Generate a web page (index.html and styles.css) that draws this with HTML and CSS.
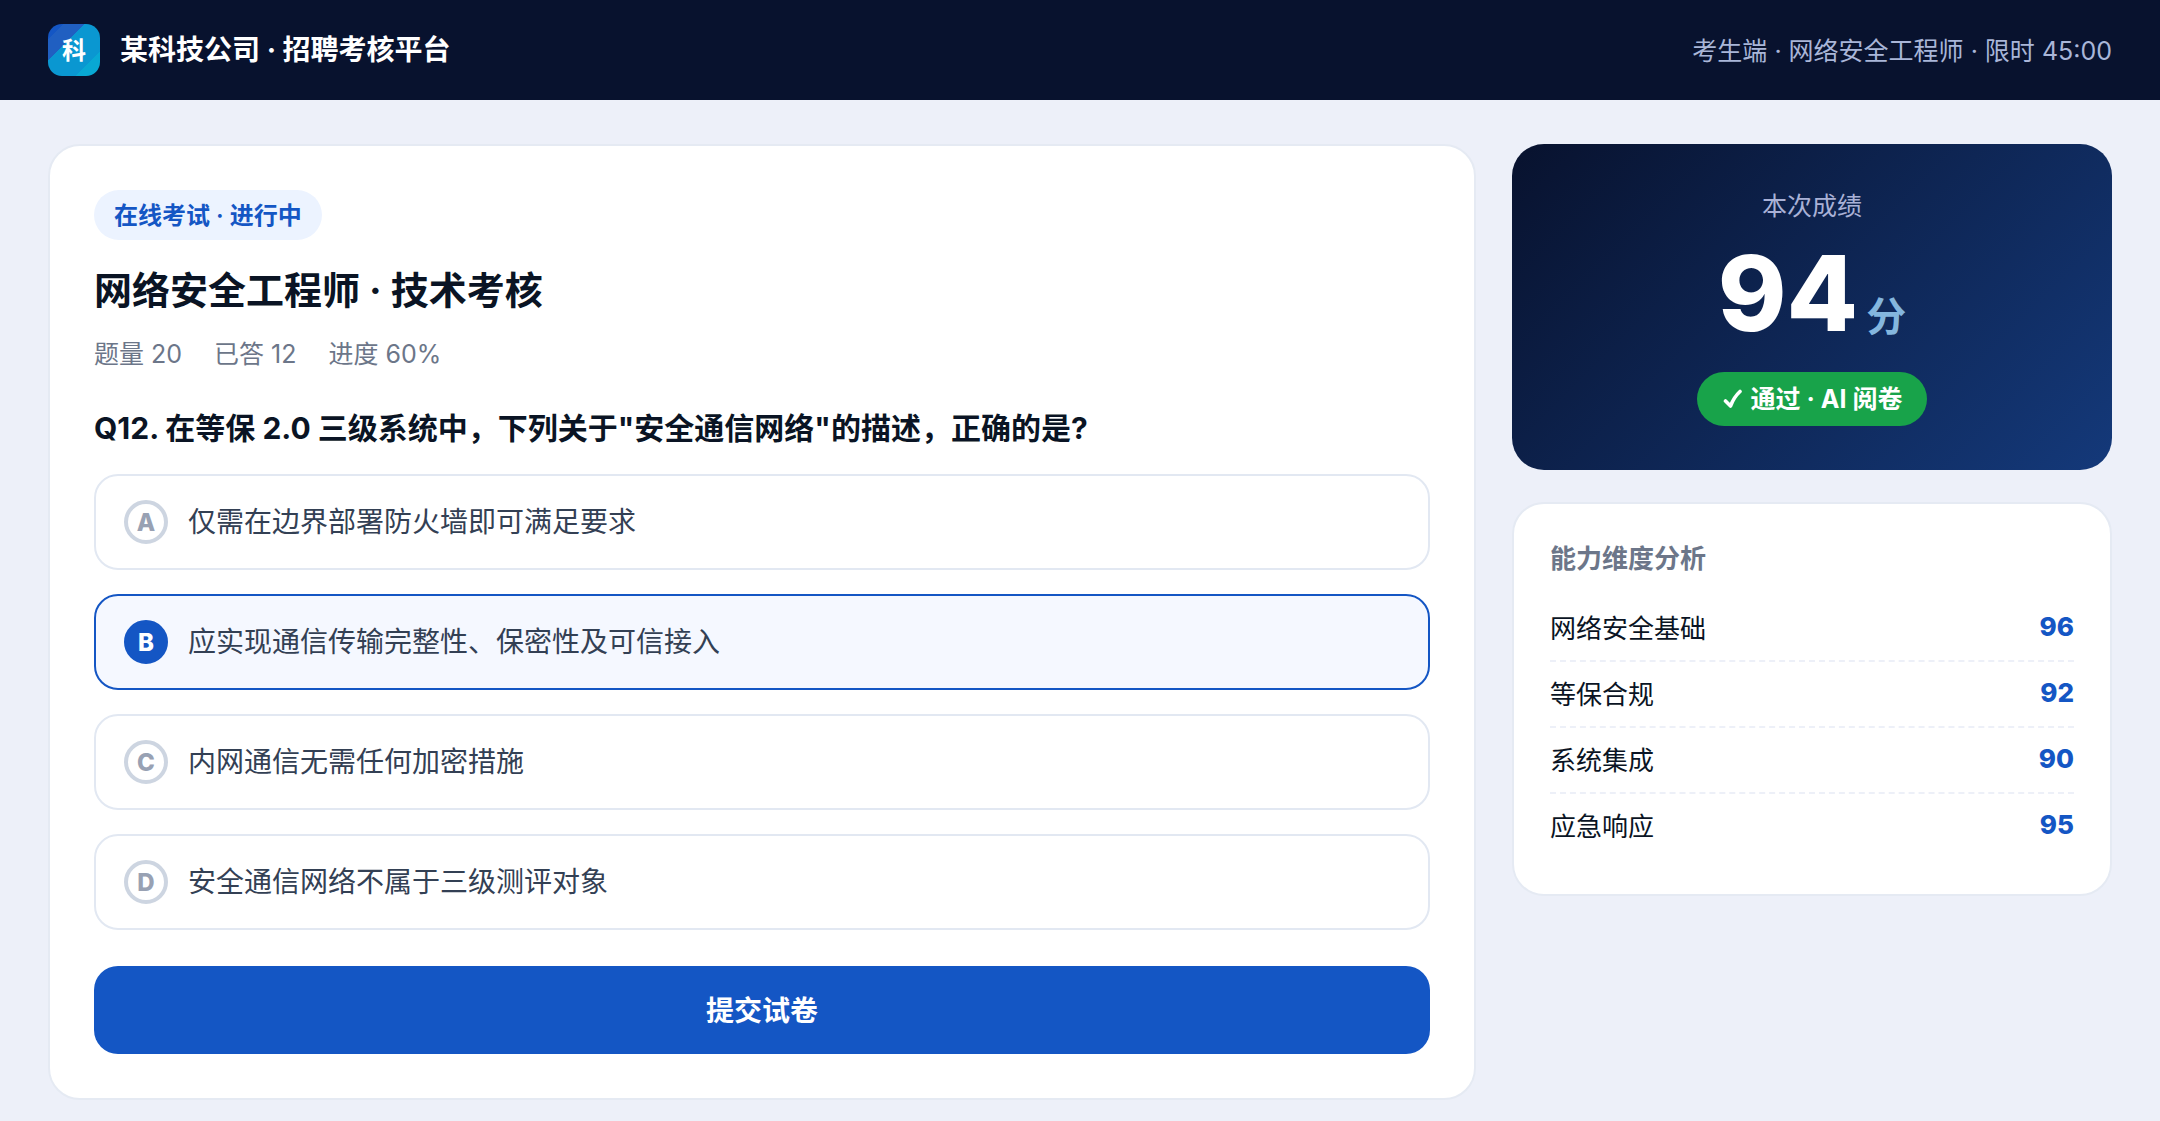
FILE: index.html
```html
<!DOCTYPE html>
<html lang="zh-CN">
<head>
  <meta charset="UTF-8">
  <meta name="viewport" content="width=device-width, initial-scale=1.0">
  <title>某科技公司 · 招聘考核平台</title>
  <link rel="stylesheet" href="styles.css">
</head>
<body>
  <header class="topbar">
    <div class="brand">
      <span class="logo">科</span>
      <span>某科技公司 · 招聘考核平台</span>
    </div>
    <div class="session">考生端 · 网络安全工程师 · 限时 45:00</div>
  </header>

  <main class="layout">
    <form class="card exam">
      <span class="tag">在线考试 · 进行中</span>
      <h1>网络安全工程师 · 技术考核</h1>
      <div class="meta">
        <span>题量 20</span>
        <span>已答 12</span>
        <span>进度 60%</span>
      </div>

      <fieldset class="question">
        <legend>Q12. 在等保 2.0 三级系统中，下列关于"安全通信网络"的描述，正确的是?</legend>
        <label class="option">
          <input type="radio" name="q12" value="A">
          <span class="letter">A</span>
          <span>仅需在边界部署防火墙即可满足要求</span>
        </label>
        <label class="option">
          <input type="radio" name="q12" value="B" checked>
          <span class="letter">B</span>
          <span>应实现通信传输完整性、保密性及可信接入</span>
        </label>
        <label class="option">
          <input type="radio" name="q12" value="C">
          <span class="letter">C</span>
          <span>内网通信无需任何加密措施</span>
        </label>
        <label class="option">
          <input type="radio" name="q12" value="D">
          <span class="letter">D</span>
          <span>安全通信网络不属于三级测评对象</span>
        </label>
      </fieldset>

      <button type="submit" class="submit">提交试卷</button>
    </form>

    <aside class="side">
      <section class="score">
        <div class="score-label">本次成绩</div>
        <div class="score-value">94<span class="unit">分</span></div>
        <span class="badge">
          <svg width="20" height="20" viewBox="0 0 20 20" aria-hidden="true">
            <path d="M2.5 12 L7.5 17 Q11 8 17 2.500" fill="none" stroke="#fff" stroke-width="3.600" stroke-linecap="round" stroke-linejoin="round"/>
          </svg>
          通过 · AI 阅卷
        </span>
      </section>

      <section class="card analysis">
        <h2>能力维度分析</h2>
        <dl>
          <div class="row"><dt>网络安全基础</dt><dd>96</dd></div>
          <div class="row"><dt>等保合规</dt><dd>92</dd></div>
          <div class="row"><dt>系统集成</dt><dd>90</dd></div>
          <div class="row"><dt>应急响应</dt><dd>95</dd></div>
        </dl>
      </section>
    </aside>
  </main>
</body>
</html>
```
FILE: styles.css
```css
* {
  margin: 0;
  padding: 0;
  box-sizing: border-box;
}

body {
  background: #edf0f9;
  color: #0a1424;
  font-family: Inter, "Noto Sans CJK SC", sans-serif;
  font-size: 26px;
  line-height: 38px;
}

/* 顶部栏 */
.topbar {
  display: flex;
  justify-content: space-between;
  align-items: center;
  padding: 24px 48px;
  background: #08122e;
  color: #fff;
}

.brand {
  display: flex;
  align-items: center;
  gap: 20px;
  font-size: 28px;
  font-weight: 700;
  line-height: 54px;
  height: 52px;
}

.logo {
  width: 52px;
  height: 52px;
  border-radius: 14px;
  background: linear-gradient(135deg, #1456c4 15%, #205fc1 15% 35%, #0a97d1 35% 76%, #08a8d3 76%);
  font-size: 24px;
  text-align: center;
}

.session {
  padding-top: 2px;
  color: #a9b6d8;
  font-size: 25px;
}

.layout {
  display: grid;
  grid-template-columns: minmax(0, 1fr) 600px;
  gap: 36px;
  align-items: start;
  padding: 44px 48px 20px;
}

.card {
  background: #fff;
  border: 2px solid #e5eaf3;
  border-radius: 32px;
}

/* 试卷 */
.exam {
  padding: 44px;
}

.tag {
  display: inline-block;
  padding: 7px 20px 5px;
  border-radius: 25px;
  background: #ecf3ff;
  color: #1456c4;
  font-size: 24px;
  font-weight: 600;
  vertical-align: top;
}

h1 {
  margin-top: 22px;
  font-size: 38px;
  font-weight: 700;
  line-height: 56px;
}

.meta {
  display: flex;
  gap: 32px;
  margin: 17px 0 33px;
  color: #6c7689;
  font-size: 25px;
}

.question {
  border: 0;
}

.question legend {
  margin-bottom: 24px;
  font-size: 30px;
  font-weight: 700;
  line-height: 44px;
}

.option {
  position: relative;
  display: flex;
  align-items: center;
  gap: 20px;
  padding: 24px 28px;
  margin-bottom: 24px;
  border: 2px solid #e2e8f2;
  border-radius: 24px;
  color: #334054;
  font-size: 28px;
  line-height: 44px;
  cursor: pointer;
}

.option input {
  position: absolute;
  opacity: 0;
}

.letter {
  width: 44px;
  height: 44px;
  border: 4px solid #cdd5e1;
  border-radius: 50%;
  color: #98a1b3;
  font-size: 24px;
  font-weight: 800;
  line-height: 38px;
  text-align: center;
}

.option:has(input:checked) {
  border-color: #1456c4;
  background: #f5f8ff;
}

.option input:checked + .letter {
  border-color: #1456c4;
  background: #1456c4;
  color: #fff;
}

.submit {
  width: 100%;
  margin-top: 12px;
  padding: 25px 24px 23px;
  border: 0;
  border-radius: 24px;
  background: #1456c4;
  color: #fff;
  font: inherit;
  font-size: 28px;
  font-weight: 700;
  line-height: 40px;
  cursor: pointer;
}

/* 成绩 */
.side {
  display: grid;
  gap: 32px;
}

.score {
  padding: 44px;
  border-radius: 32px;
  background: linear-gradient(135deg, #08122e, #14397a);
  color: #fff;
  text-align: center;
}

.score-label {
  color: #a9b1d6;
  font-size: 25px;
  line-height: 36px;
}

.score-value {
  margin: 14px 0 24px;
  font-size: 104px;
  font-weight: 800;
  line-height: 110px;
}

.unit {
  margin-left: 8px;
  color: #84b6de;
  font-size: 40px;
  font-weight: 600;
  line-height: 40px;
}

.badge {
  display: inline-flex;
  align-items: center;
  gap: 8px;
  padding: 8px 25px 8px 26px;
  border-radius: 27px;
  background: #18a34a;
  font-size: 25px;
  font-weight: 700;
  vertical-align: top;
}

/* 能力维度 */
.analysis {
  padding: 36px;
}

.analysis h2 {
  margin-bottom: 18px;
  color: #6c7689;
  font-size: 26px;
  font-weight: 700;
}

.row {
  display: flex;
  justify-content: space-between;
  align-items: flex-start;
  padding: 14px 0 12px;
  border-bottom: 2px dashed #edf0f8;
}

.row:last-child {
  border-bottom: 0;
}

.row dd {
  color: #1456c4;
  font-weight: 800;
  line-height: 34px;
}
```
